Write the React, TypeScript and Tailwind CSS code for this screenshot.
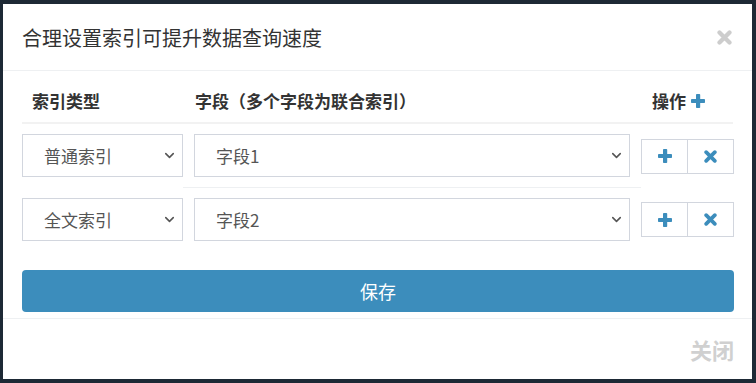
import { ChevronDown } from "lucide-react";

const rows = [
  { type: "普通索引", field: "字段1", border: true },
  { type: "全文索引", field: "字段2", border: false },
];

function PlusIcon({ className }: { className: string }) {
  return (
    <svg width="14" height="14" viewBox="0 0 14 14" className={className}>
      <rect x="5" y="0" width="4.2" height="14" rx="0.8" fill="currentColor" />
      <rect x="0" y="4.9" width="14" height="4.2" rx="0.8" fill="currentColor" />
    </svg>
  );
}

function CrossIcon({ size, className }: { size: number; className: string }) {
  return (
    <svg width={size} height={size} viewBox="0 0 12 12" className={className}>
      <path d="M2 2 L10 10 M10 2 L2 10" stroke="currentColor" strokeWidth="3.4" strokeLinecap="round" />
    </svg>
  );
}

function Select({ value }: { value: string }) {
  return (
    <div className="flex h-[43px] items-center justify-between border border-[#d2d6de] bg-white pl-[21px] pr-[5px] text-[17px] text-[#555]">
      <span>{value}</span>
      <ChevronDown size={15} strokeWidth={2.5} className="text-[#555]" />
    </div>
  );
}

export default function App() {
  return (
    <div className="h-screen w-full overflow-hidden bg-[#1d2935] pl-[3px] pt-[4px] font-['Noto_Sans_CJK_SC',sans-serif]">
      <div className="flex h-[375px] w-[749px] flex-col bg-white">
        <div className="flex h-[67px] items-center justify-between border-b border-[#eef0f2] pl-[19px] pr-[20px]">
          <h4 className="pt-[2px] text-[20px] text-[#333]">合理设置索引可提升数据查询速度</h4>
          <CrossIcon size={15} className="text-[#cdcdcd]" />
        </div>

        <div className="px-[19px] pt-[8px]">
          <div className="grid h-[45px] grid-cols-[161px_458px_93px] items-center border-b-2 border-[#f2f2f2] text-[17px] font-bold text-[#333]">
            <div className="pl-[10px]">索引类型</div>
            <div className="pl-[12px]">字段（多个字段为联合索引）</div>
            <div className="flex items-center gap-[5px] pl-[11px]">
              操作
              <PlusIcon className="text-[#3c8dbc]" />
            </div>
          </div>

          {rows.map((r) => (
            <div key={r.field} className="grid grid-cols-[161px_458px_93px]">
              <div className="py-[10px]">
                <Select value={r.type} />
              </div>
              <div className={`px-[11px] py-[10px] ${r.border ? "border-b border-[#eef0f2]" : ""}`}>
                <Select value={r.field} />
              </div>
              <div className="flex items-center">
                <div className="flex h-[35px] w-[93px] border border-[#d2d6de]">
                  <div className="flex flex-1 items-center justify-center border-r border-[#d2d6de]">
                    <PlusIcon className="text-[#3c8dbc]" />
                  </div>
                  <div className="flex flex-1 items-center justify-center">
                    <CrossIcon size={13} className="text-[#3c8dbc]" />
                  </div>
                </div>
              </div>
            </div>
          ))}

          <button className="mt-[19px] mb-[6px] flex h-[42px] w-[712px] items-center justify-center rounded-[4px] bg-[#3c8dbc] text-[18px] text-white">
            保存
          </button>
        </div>

        <div className="flex flex-1 items-center justify-end border-t border-[#eef0f2] pr-[18px]">
          <span className="text-[22px] font-bold text-[#d0d0d0]">关闭</span>
        </div>
      </div>
    </div>
  );
}
